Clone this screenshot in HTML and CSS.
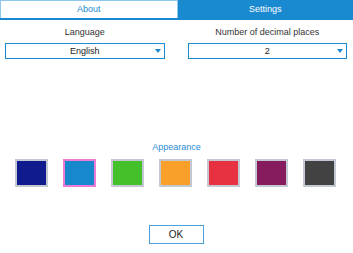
FILE: index.html
```html
<!DOCTYPE html>
<html>
<head>
<meta charset="utf-8">
<link rel="stylesheet" href="styles.css">
</head>
<body>
<div class="tabs">
  <div class="tab tab-about">About</div>
  <div class="tab tab-settings">Settings</div>
</div>
<div class="panel">
  <div class="fields">
    <div class="field">
      <div class="label">Language</div>
      <div class="select">English<span class="arrow"></span></div>
    </div>
    <div class="field">
      <div class="label">Number of decimal places</div>
      <div class="select">2<span class="arrow"></span></div>
    </div>
  </div>
  <div class="appearance">
    <div class="app-label">Appearance</div>
    <div class="swatches">
      <div class="swatch" style="background:#101c8e"></div>
      <div class="swatch selected" style="background:#1788cc"></div>
      <div class="swatch" style="background:#43c02a"></div>
      <div class="swatch" style="background:#f8a02a"></div>
      <div class="swatch" style="background:#e73040"></div>
      <div class="swatch" style="background:#861c5e"></div>
      <div class="swatch" style="background:#424242"></div>
    </div>
  </div>
  <div class="actions">
    <div class="ok">OK</div>
  </div>
</div>
</body>
</html>
```
FILE: styles.css
```css
html, body {
  margin: 0;
  padding: 0;
  background: #ffffff;
  font-family: "Liberation Sans", Arial, sans-serif;
  font-size: 9px;
  color: #2a2a2a;
}
.tabs {
  display: flex;
  height: 18px;
  border-bottom: 2px solid #1a8ad0;
}
.tab {
  flex: 1;
  text-align: center;
  line-height: 18px;
  font-size: 9px;
  box-sizing: border-box;
}
.tab-about {
  color: #1a8ad0;
  background: #ffffff;
  border-top: 1px solid #8cc6ec;
  border-left: 1px solid #8cc6ec;
  border-right: 1px solid #8cc6ec;
  line-height: 17px;
}
.tab-settings {
  background: #1a8ad0;
  color: #ffffff;
}
.panel {
  padding: 7px 6px 0 5px;
}
.fields {
  display: grid;
  grid-template-columns: 1fr 1fr;
  column-gap: 23px;
}
.field {
  display: flex;
  flex-direction: column;
  align-items: stretch;
}
.label {
  text-align: center;
  line-height: 11px;
  color: #333333;
  margin-bottom: 5px;
}
.select {
  position: relative;
  height: 16px;
  box-sizing: border-box;
  border: 1px solid #1a8ad0;
  text-align: center;
  line-height: 14px;
  color: #222222;
}
.arrow {
  position: absolute;
  right: 3px;
  top: 5px;
  width: 0;
  height: 0;
  border-left: 3px solid transparent;
  border-right: 3px solid transparent;
  border-top: 4px solid #1a8ad0;
}
.appearance {
  margin-top: 83px;
  display: flex;
  flex-direction: column;
}
.app-label {
  text-align: center;
  color: #2a8ed6;
  line-height: 11px;
  padding-left: 1px;
}
.swatches {
  display: flex;
  gap: 15px;
  margin-top: 6px;
  margin-left: 10px;
}
.swatch {
  width: 33px;
  height: 28px;
  box-sizing: border-box;
  border: 2px solid #c4c8d2;
}
.swatch.selected {
  border-color: #f07ad8;
}
.actions {
  display: flex;
  justify-content: center;
  margin-top: 38px;
}
.ok {
  width: 55px;
  height: 19px;
  box-sizing: border-box;
  border: 1px solid #4aa2dc;
  text-align: center;
  line-height: 17px;
  font-size: 10px;
  color: #222222;
}
```
